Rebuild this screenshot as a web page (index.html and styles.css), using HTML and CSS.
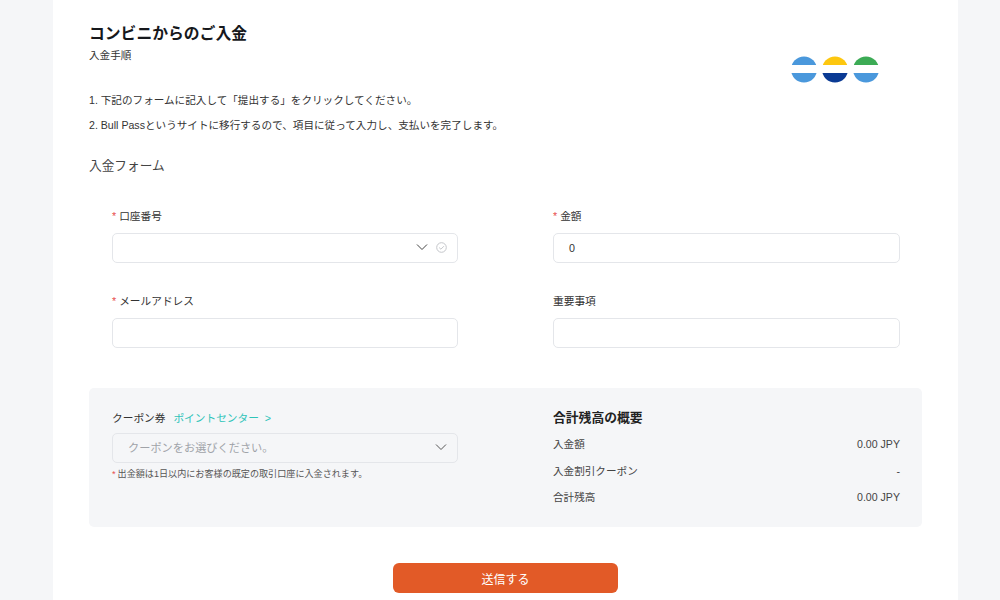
FILE: index.html
```html
<!DOCTYPE html>
<html lang="ja">
<head>
    <meta charset="UTF-8">
    <meta name="viewport" content="width=device-width, initial-scale=1.0">
    <title>コンビニからのご入金</title>
    <link rel="stylesheet" href="styles.css">
</head>
<body>
    <div class="page-card">
        <div class="head-row">
            <div>
                <h1 class="title">コンビニからのご入金</h1>
                <p class="subtitle">入金手順</p>
            </div>
            <svg class="store-logo" width="88" height="27" viewBox="0 0 88 27">
                <defs>
                    <clipPath id="c1"><circle cx="13" cy="13.5" r="13"/></clipPath>
                    <clipPath id="c2"><circle cx="44" cy="13.5" r="13"/></clipPath>
                    <clipPath id="c3"><circle cx="75" cy="13.5" r="13"/></clipPath>
                </defs>
                <g clip-path="url(#c1)">
                    <rect x="0" y="0" width="26" height="9" fill="#4a98dc"/>
                    <rect x="0" y="17" width="26" height="10" fill="#4a98dc"/>
                </g>
                <g clip-path="url(#c2)">
                    <rect x="31" y="0" width="26" height="9" fill="#fdc70f"/>
                    <rect x="31" y="17" width="26" height="10" fill="#0a3a94"/>
                </g>
                <g clip-path="url(#c3)">
                    <rect x="62" y="0" width="26" height="9" fill="#3cab55"/>
                    <rect x="62" y="17" width="26" height="10" fill="#4a98dc"/>
                </g>
            </svg>
        </div>

        <ol class="steps">
            <li>1. 下記のフォームに記入して「提出する」をクリックしてください。</li>
            <li>2. Bull Passというサイトに移行するので、項目に従って入力し、支払いを完了します。</li>
        </ol>

        <h2 class="section-title">入金フォーム</h2>

        <div class="form-grid">
            <div class="form-group">
                <label class="form-label"><span class="req">*</span>口座番号</label>
                <div class="form-input">
                    <span class="input-icons">
                        <svg width="12" height="8" viewBox="0 0 12 8"><path d="M1 1.5l5 5 5-5" fill="none" stroke="#444" stroke-width="1"/></svg>
                        <svg width="11" height="11" viewBox="0 0 11 11"><circle cx="5.5" cy="5.5" r="4.8" fill="none" stroke="#c4c6ca"/><path d="M3.2 5.6l1.7 1.6 3-3" fill="none" stroke="#c4c6ca"/></svg>
                    </span>
                </div>
            </div>
            <div class="form-group">
                <label class="form-label"><span class="req">*</span>金額</label>
                <div class="form-input">0</div>
            </div>
            <div class="form-group">
                <label class="form-label"><span class="req">*</span>メールアドレス</label>
                <div class="form-input"></div>
            </div>
            <div class="form-group">
                <label class="form-label">重要事項</label>
                <div class="form-input"></div>
            </div>
        </div>

        <div class="summary-box">
            <div class="coupon">
                <div class="coupon-head">クーポン券 <a href="#" class="point-link">ポイントセンター &nbsp;&gt;</a></div>
                <div class="form-input coupon-select">
                    クーポンをお選びください。
                    <span class="input-icons">
                        <svg width="12" height="8" viewBox="0 0 12 8"><path d="M1 1.5l5 5 5-5" fill="none" stroke="#555" stroke-width="1"/></svg>
                    </span>
                </div>
                <p class="coupon-note"><span class="req">*</span>出金額は1日以内にお客様の既定の取引口座に入金されます。</p>
            </div>
            <div class="balance">
                <h3 class="balance-title">合計残高の概要</h3>
                <div class="balance-row"><span>入金額</span><span>0.00 JPY</span></div>
                <div class="balance-row"><span>入金割引クーポン</span><span>-</span></div>
                <div class="balance-row"><span>合計残高</span><span>0.00 JPY</span></div>
            </div>
        </div>

        <div class="submit-row">
            <button type="button" class="submit-btn">送信する</button>
        </div>
    </div>
</body>
</html>
```

FILE: styles.css
```css
* {
    margin: 0;
    padding: 0;
    box-sizing: border-box;
}

html, body {
    height: 600px;
    overflow: hidden;
}

body {
    font-family: "Liberation Sans", "Noto Sans CJK JP", sans-serif;
    background: #f5f6f8;
    color: #333;
    font-size: 11px;
}

.page-card {
    width: 905px;
    height: 600px;
    margin-left: 53px;
    padding: 0 36px;
    background: #fff;
    overflow: hidden;
}

.head-row {
    display: flex;
    justify-content: space-between;
    padding: 23px 43px 0 0;
    height: 92px;
}

.title {
    font-size: 15.8px;
    line-height: 22px;
    font-weight: 700;
    color: #16181c;
}

.subtitle {
    font-size: 10.6px;
    line-height: 16px;
    margin-top: 2px;
    color: #333;
}

.store-logo {
    margin-top: 33px;
}

.steps {
    list-style: none;
    font-size: 10.6px;
    line-height: 16px;
}

.steps li {
    margin-bottom: 9px;
}

.section-title {
    font-size: 12.7px;
    line-height: 18px;
    font-weight: 400;
    margin-top: 24px;
    color: #444;
}

.form-grid {
    display: grid;
    grid-template-columns: 346px 347px;
    column-gap: 95px;
    row-gap: 30px;
    padding: 33px 0 0 23px;
}

.form-label {
    display: block;
    font-size: 10.7px;
    line-height: 16px;
    margin-bottom: 9px;
    color: #333;
}

.req {
    color: #e8504f;
    margin-right: 3px;
}

.form-input {
    position: relative;
    height: 30px;
    padding: 0 15px;
    line-height: 28px;
    font-size: 10.7px;
    border: 1px solid #e4e6ea;
    border-radius: 5px;
    background: #fff;
    color: #333;
}

.input-icons {
    position: absolute;
    right: 10px;
    top: -1px;
    height: 28px;
    display: flex;
    align-items: center;
    gap: 8px;
}

.summary-box {
    display: grid;
    grid-template-columns: 346px 347px;
    column-gap: 95px;
    height: 139px;
    margin-top: 40px;
    padding: 20px 23px 0;
    background: #f5f6f8;
    border-radius: 5px;
}

.coupon-head {
    font-size: 10.7px;
    line-height: 18px;
    padding-top: 1px;
    color: #333;
    margin-bottom: 6px;
}

.point-link {
    color: #2fc4b8;
    text-decoration: none;
    margin-left: 5px;
}

.coupon-select {
    background: #f5f6f8;
    color: #a0a3a8;
    font-size: 11.2px;
}

.coupon-note {
    font-size: 9.1px;
    line-height: 14px;
    margin-top: 4px;
    color: #555;
}

.coupon-note .req {
    margin-right: 2px;
}

.balance-title {
    font-size: 12.8px;
    line-height: 20px;
    font-weight: 700;
    color: #222;
    margin-bottom: 8px;
}

.balance-row {
    display: flex;
    justify-content: space-between;
    font-size: 10.6px;
    line-height: 16px;
    margin-bottom: 10.5px;
    color: #444;
}

.submit-row {
    display: flex;
    justify-content: center;
    margin-top: 36px;
}

.submit-btn {
    width: 225px;
    height: 30px;
    border: none;
    border-radius: 6px;
    background: #e25a27;
    color: #fff;
    font-family: inherit;
    font-size: 12px;
}
```
